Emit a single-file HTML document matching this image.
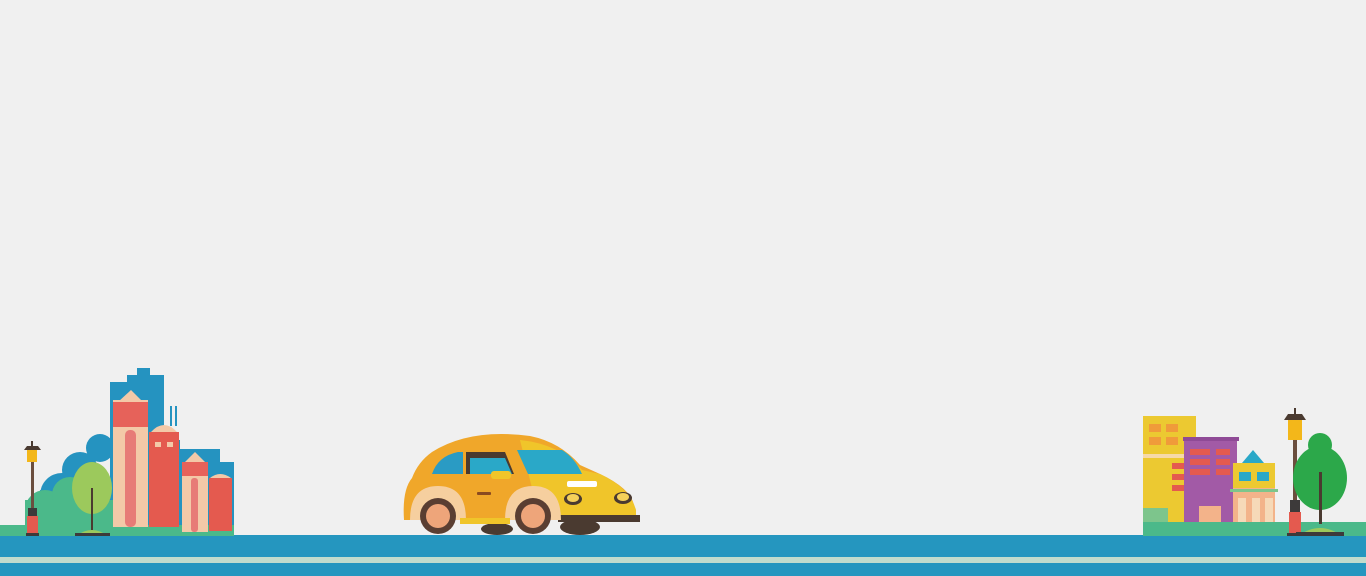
<!DOCTYPE html>
<html><head><meta charset="utf-8"><style>
html,body{margin:0;padding:0;background:#f0f0f0;width:1366px;height:576px;overflow:hidden}
svg{position:absolute;left:0;top:0}
</style></head><body>
<svg width="1366" height="576" viewBox="0 0 1366 576">
<rect width="1366" height="576" fill="#f0f0f0"/>
<!-- road -->
<rect x="0" y="535" width="1366" height="22" fill="#2596bf"/>
<rect x="0" y="557" width="1366" height="6" fill="#c2dccd"/>
<rect x="0" y="563" width="1366" height="13" fill="#2596bf"/>

<!-- LEFT CITY -->
<path d="M110 525 V382 H127 V375 H137 V368 H150 V375 H164 V440 H180 V449 H220 V462 H234 V525Z" fill="#2593c0"/>
<rect x="170" y="406" width="2" height="20" fill="#2593c0"/><rect x="175" y="406" width="2" height="20" fill="#2593c0"/>
<circle cx="62" cy="495" r="22" fill="#2593c0"/><circle cx="80" cy="470" r="18" fill="#2593c0"/><circle cx="100" cy="448" r="14" fill="#2593c0"/>
<rect x="40" y="490" width="80" height="35" fill="#2593c0"/>
<circle cx="45" cy="510" r="20" fill="#4bb98a"/><circle cx="70" cy="495" r="18" fill="#4bb98a"/>
<rect x="25" y="500" width="90" height="25" fill="#4bb98a"/>
<rect x="0" y="525" width="234" height="11" fill="#4bb98a"/>
<!-- tree -->
<ellipse cx="92" cy="488" rx="20" ry="26" fill="#9cc95c"/>
<rect x="91" y="488" width="2" height="42" fill="#4a3a30"/>
<path d="M76 536 Q92 524 108 536Z" fill="#9cc95c"/><rect x="75" y="533" width="35" height="3" fill="#3d3a3a"/>
<!-- lamp -->
<rect x="31" y="460" width="3" height="50" fill="#6b4e3e"/>
<rect x="27" y="450" width="10" height="12" fill="#f3b71a"/>
<path d="M24 450 H41 L38 446 H27Z" fill="#4a3a30"/><rect x="31" y="441" width="2" height="5" fill="#4a3a30"/>
<rect x="28" y="508" width="9" height="8" fill="#3d3a3a"/>
<rect x="27" y="516" width="11" height="18" fill="#e45a4f"/>
<rect x="26" y="533" width="13" height="3" fill="#3d3a3a"/>
<!-- tall building -->
<rect x="113" y="400" width="35" height="127" fill="#f3c9a8"/>
<rect x="113" y="402" width="35" height="25" fill="#e6625a"/>
<path d="M118 402 L131 390 L143 402Z" fill="#f3c9a8"/>
<rect x="125" y="430" width="11" height="97" rx="5" fill="#e77b77"/>
<!-- second -->
<rect x="149" y="432" width="30" height="95" fill="#e45a4f"/>
<path d="M151 432 Q164 418 177 432Z" fill="#f3c9a8"/>
<rect x="155" y="442" width="6" height="5" fill="#f3c9a8"/><rect x="167" y="442" width="6" height="5" fill="#f3c9a8"/>
<!-- third -->
<rect x="182" y="462" width="26" height="70" fill="#f3c9a8"/>
<rect x="182" y="462" width="26" height="14" fill="#e6625a"/>
<path d="M185 462 L195 452 L205 462Z" fill="#f3c9a8"/>
<rect x="191" y="478" width="7" height="54" rx="3" fill="#e77b77"/>
<!-- fourth -->
<rect x="209" y="478" width="23" height="53" fill="#e45a4f"/>
<path d="M210 478 Q220 470 231 478Z" fill="#f3c9a8"/>

<!-- CAR -->
<path d="M404 520 Q402 490 412 478 Q418 462 432 452 Q470 428 530 436 Q560 442 580 465 L600 474 Q630 488 634 505 L636 520Z" fill="#f0a72a"/>
<path d="M520 440 Q560 444 582 470 L600 474 Q630 488 636 510 L636 520 H540Z" fill="#f0c52a"/>
<path d="M432 474 Q438 456 458 452 H463 V474Z" fill="#2a9bc4"/>
<path d="M466 452 H505 L514 474 H466Z" fill="#4a3a30"/>
<path d="M470 458 H505 L512 474 H470Z" fill="#2aa8c8"/>
<path d="M517 450 H562 Q575 458 582 474 H528Z" fill="#2aa8c8"/>
<rect x="491" y="471" width="20" height="8" rx="3" fill="#f0c52a"/>
<rect x="567" y="481" width="30" height="6" rx="2" fill="#fff"/>
<ellipse cx="573" cy="499" rx="9" ry="6" fill="#4a3a30"/><ellipse cx="573" cy="498" rx="6" ry="4" fill="#f5d05a"/>
<ellipse cx="623" cy="498" rx="9" ry="6" fill="#4a3a30"/><ellipse cx="623" cy="497" rx="6" ry="4" fill="#f5d05a"/>
<rect x="477" y="492" width="14" height="3" rx="1" fill="#8a4a20"/>
<rect x="558" y="515" width="82" height="7" fill="#4a3a30"/>
<path d="M410 520 Q410 486 438 486 Q466 486 466 520Z" fill="#f6cf9f"/>
<path d="M505 520 Q505 486 533 486 Q561 486 561 520Z" fill="#f6cf9f"/>
<ellipse cx="580" cy="527" rx="20" ry="8" fill="#4a3a30"/>
<ellipse cx="497" cy="529" rx="16" ry="6" fill="#4a3a30"/>
<circle cx="438" cy="516" r="18" fill="#5a3e32"/><circle cx="438" cy="516" r="12" fill="#eea57a"/>
<circle cx="533" cy="516" r="18" fill="#5a3e32"/><circle cx="533" cy="516" r="12" fill="#eea57a"/>
<rect x="460" y="518" width="50" height="6" fill="#f0c52a"/>

<!-- RIGHT CITY -->
<rect x="1143" y="416" width="53" height="107" fill="#ecc931"/>
<rect x="1143" y="454" width="45" height="4" fill="#f6d9a8"/>
<rect x="1149" y="424" width="12" height="8" fill="#f09b3a"/><rect x="1166" y="424" width="12" height="8" fill="#f09b3a"/>
<rect x="1149" y="437" width="12" height="8" fill="#f09b3a"/><rect x="1166" y="437" width="12" height="8" fill="#f09b3a"/>
<rect x="1143" y="508" width="25" height="15" fill="#7dc58c"/>
<rect x="1172" y="463" width="16" height="6" fill="#e45a4f"/><rect x="1172" y="474" width="16" height="6" fill="#e45a4f"/><rect x="1172" y="485" width="16" height="6" fill="#e45a4f"/>
<rect x="1184" y="439" width="53" height="84" fill="#a25aa6"/>
<rect x="1183" y="437" width="56" height="4" fill="#8f4a96"/>
<rect x="1190" y="449" width="20" height="6" fill="#e45a4f"/><rect x="1216" y="449" width="14" height="6" fill="#e45a4f"/>
<rect x="1190" y="459" width="20" height="6" fill="#e45a4f"/><rect x="1216" y="459" width="14" height="6" fill="#e45a4f"/>
<rect x="1190" y="469" width="20" height="6" fill="#e45a4f"/><rect x="1216" y="469" width="14" height="6" fill="#e45a4f"/>
<rect x="1199" y="506" width="22" height="17" fill="#f3b38a"/>
<rect x="1233" y="463" width="42" height="60" fill="#f3b38a"/>
<rect x="1233" y="463" width="42" height="25" fill="#ecc931"/>
<path d="M1242 463 L1253 450 L1264 463Z" fill="#2aa8c8"/>
<rect x="1239" y="472" width="12" height="9" fill="#2aa8c8"/><rect x="1257" y="472" width="12" height="9" fill="#2aa8c8"/>
<rect x="1230" y="489" width="48" height="3" fill="#7dc58c"/>
<rect x="1238" y="498" width="8" height="25" fill="#f6d9b8"/><rect x="1252" y="498" width="8" height="25" fill="#f6d9b8"/><rect x="1265" y="498" width="8" height="25" fill="#f6d9b8"/>
<rect x="1143" y="522" width="223" height="14" fill="#4bb98a"/>
<!-- lamp -->
<rect x="1293" y="440" width="4" height="60" fill="#6b4e3e"/>
<rect x="1288" y="420" width="14" height="20" fill="#f3b71a"/>
<path d="M1284 420 H1306 L1302 414 H1288Z" fill="#4a3a30"/><rect x="1294" y="408" width="2" height="6" fill="#4a3a30"/>
<rect x="1290" y="500" width="10" height="12" fill="#3d3a3a"/>
<rect x="1289" y="512" width="12" height="22" fill="#e45a4f"/>
<rect x="1287" y="533" width="16" height="3" fill="#3d3a3a"/>
<!-- tree -->
<circle cx="1320" cy="445" r="12" fill="#2ca84a"/>
<ellipse cx="1320" cy="478" rx="27" ry="32" fill="#2ca84a"/>
<rect x="1319" y="472" width="3" height="52" fill="#4a3a30"/>
<path d="M1298 536 Q1320 520 1342 536Z" fill="#9cc95c"/>
<rect x="1296" y="532" width="48" height="4" fill="#3d3a3a"/>
</svg>
</body></html>
